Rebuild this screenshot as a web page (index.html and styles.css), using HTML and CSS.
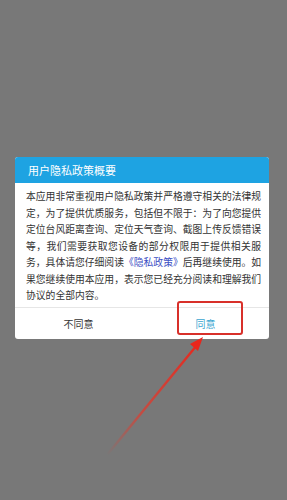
FILE: index.html
```html
<!DOCTYPE html>
<html lang="zh-CN">
<head>
<meta charset="utf-8">
<link rel="stylesheet" href="styles.css">
</head>
<body>
<div class="screen">
  <div class="dialog">
    <div class="dialog-header">用户隐私政策概要</div>
    <p class="dialog-body">
      <span class="ln">本应用非常重视用户隐私政策并严格遵守相关的法律规</span>
      <span class="ln">定，为了提供优质服务，包括但不限于：为了向您提供</span>
      <span class="ln">定位台风距离查询、定位天气查询、截图上传反馈错误</span>
      <span class="ln">等，我们需要获取您设备的部分权限用于提供相关服</span>
      <span class="ln">务，具体请您仔细阅读<span class="link">《隐私政策》</span>后再继续使用。如</span>
      <span class="ln">果您继续使用本应用，表示您已经充分阅读和理解我们</span>
      <span class="ln last">协议的全部内容。</span>
    </p>
    <div class="dialog-actions">
      <div class="btn btn-no">不同意</div>
      <div class="btn btn-yes">同意</div>
    </div>
  </div>
  <div class="highlight"></div>
  <svg class="arrow" width="287" height="500" viewBox="0 0 287 500">
    <defs>
      <linearGradient id="fade" x1="107" y1="455" x2="202" y2="338" gradientUnits="userSpaceOnUse">
        <stop offset="0" stop-color="#e23a2c" stop-opacity="0"/>
        <stop offset="0.35" stop-color="#e23a2c" stop-opacity="0.7"/>
        <stop offset="1" stop-color="#e8261c" stop-opacity="1"/>
      </linearGradient>
    </defs>
    <line x1="107" y1="455" x2="197" y2="345" stroke="url(#fade)" stroke-width="2.5" stroke-linecap="round"/>
    <polygon points="203,337 190,344 198,351" fill="#e8261c"/>
  </svg>
</div>
</body>
</html>
```
FILE: styles.css
```css
html, body {
  margin: 0;
  padding: 0;
}
body {
  width: 287px;
  height: 500px;
  overflow: hidden;
  background: #787878;
  font-family: "Noto Sans CJK SC", "Noto Sans", sans-serif;
}
.screen {
  position: relative;
  width: 287px;
  height: 500px;
  padding-top: 157px;
  box-sizing: border-box;
}
.dialog {
  margin: 0 18px 0 15px;
  background: #ffffff;
  border-radius: 3px;
  overflow: hidden;
}
.dialog-header {
  height: 26px;
  line-height: 26px;
  background: #1ea3e2;
  color: #ffffff;
  font-size: 11px;
  padding-left: 13px;
}
.dialog-body {
  margin: 0;
  padding: 5px 8px 3px 11px;
  font-size: 9.8px;
  line-height: 16.5px;
  color: #333333;
}
.ln {
  display: block;
  white-space: nowrap;
  text-align: justify;
  text-align-last: justify;
}
.ln.last {
  text-align-last: left;
}
.link {
  color: #3d4fc4;
}
.dialog-actions {
  display: flex;
  border-top: 1px solid #e6e6e6;
  height: 31px;
}
.btn {
  flex: 1;
  display: flex;
  align-items: center;
  justify-content: center;
  font-size: 10px;
}
.btn-no {
  color: #333333;
}
.btn-yes {
  color: #3aa6d0;
}
.highlight {
  position: absolute;
  left: 177px;
  top: 301px;
  width: 66px;
  height: 34px;
  box-sizing: border-box;
  border: 2px solid #d8302a;
  border-radius: 3px;
}
.arrow {
  position: absolute;
  left: 0;
  top: 0;
}
```
